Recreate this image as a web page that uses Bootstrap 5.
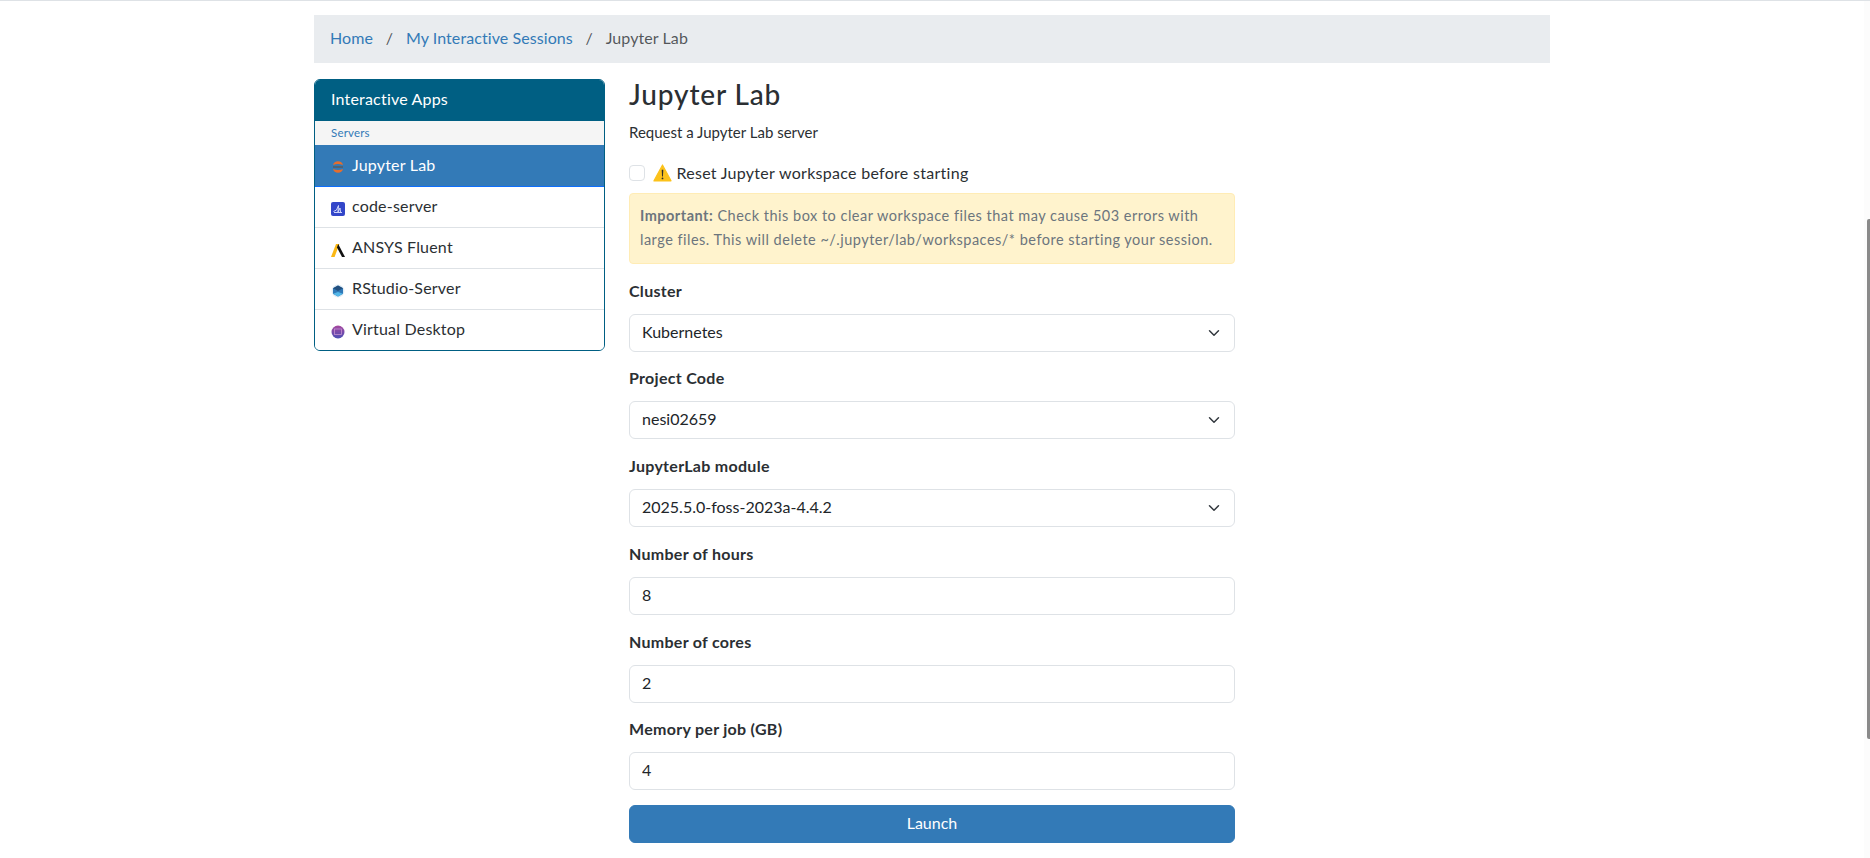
<!DOCTYPE html>
<html lang="en">
<head>
    <meta charset="UTF-8" />
    <meta name="viewport" content="width=device-width, initial-scale=1.0"/>
    <title>Jupyter Lab</title>
    <link href="https://cdn.jsdelivr.net/npm/bootstrap@5.3.1/dist/css/bootstrap.min.css" rel="stylesheet"/>
    <style>
        html, body { height: 100%; overflow: hidden; }
        body { font-family: "Lato", "Liberation Sans", sans-serif; color: #2b2f33; letter-spacing: .012em; }
        a { color: #337ab7; text-decoration: none; }
        .page-shell { height: 100%; display: flex; border-top: 1px solid #dee2e6; }
        .page-main { flex: 1 1 auto; min-width: 0; }
        .page-wrap { max-width: 1260px; margin: 0 auto; padding: 0 12px; }
        .fake-scroll { flex: 0 0 6px; background: #fcfcfc; display: flex; flex-direction: column; align-items: flex-end; padding-top: 218px; }
        .fake-thumb { width: 3px; height: 520px; background: #8a8a8a; border-radius: 2px 0 0 2px; }
        .crumbs { --bs-breadcrumb-item-padding-x: .8rem; background: #e9ecef; padding: 11px 16px 13px; margin: 14px 0 16px; letter-spacing: .005em; }
        .apps-box { border: 1px solid #005f83; border-radius: 6px; overflow: hidden; }
        .apps-head { background: #005f83; color: #fff; padding: 7px 16px 10px; }
        .apps-group { background: #f5f5f5; color: #337ab7; font-size: 11.5px; line-height: 24px; padding: 0 16px; }
        .apps-box .list-group-item { padding: 7px 16px 9px; color: #2b2f33; border-width: 0 0 1px; display: flex; align-items: center; gap: 7px; }
        .apps-box .list-group-item:last-child { border-bottom: 0; }
        .apps-box .list-group-item.active { background: #337ab7; color: #fff; padding: 8px 16px 9px; }
        .app-icon { width: 14px; height: 14px; flex: none; margin-top: 6px; }
        .active .app-icon { margin-top: 4px; }
        .app-title { font-size: 28px; font-weight: 500; line-height: 34px; margin: -2px 0 10px; letter-spacing: .03em; }
        .app-sub { font-size: 15px; letter-spacing: 0; margin-bottom: 17px; }
        .reset-check { margin-bottom: 8px; padding-left: 0; display: flex; align-items: center; gap: 8px; min-height: 24px; letter-spacing: .018em; }
        .reset-check .form-check-input { float: none; margin: 0; width: 16px; height: 16px; }
        .warn-icon { width: 19px; height: 18px; vertical-align: -3px; }
        .reset-note { background: #fff3cd; border: 1px solid #ffecb5; border-radius: 4px; color: #6c757d; font-size: 14.5px; letter-spacing: .034em; line-height: 24px; padding: 10px 10px 11px; margin-bottom: 15px; }
        .field { margin-bottom: 14.8px; }
        .field label { font-weight: 700; margin-bottom: 11px; display: block; letter-spacing: .018em; }
        .form-select, .form-control { padding-top: 5px; padding-bottom: 7px; }
        .tight-value { letter-spacing: 0; }
        .launch-btn { --bs-btn-bg: #337ab7; --bs-btn-border-color: #337ab7; padding-top: 5px; padding-bottom: 7px; }
    </style>
</head>
<body>
<div class="page-shell">
    <div class="page-main">
        <div class="page-wrap">
            <nav>
                <ol class="breadcrumb crumbs">
                    <li class="breadcrumb-item"><a href="#">Home</a></li>
                    <li class="breadcrumb-item"><a href="#">My Interactive Sessions</a></li>
                    <li class="breadcrumb-item active">Jupyter Lab</li>
                </ol>
            </nav>
            <div class="row">
                <div class="col-3">
                    <div class="apps-box">
                        <div class="apps-head">Interactive Apps</div>
                        <div class="apps-group">Servers</div>
                        <div class="list-group list-group-flush">
                            <a href="#" class="list-group-item active">
                                <svg class="app-icon" viewBox="0 0 14 14"><path d="M2 5a5.2 5.2 0 0 1 10 0a7 3 0 0 0-10 0z" fill="#e46e2e"/><path d="M2 9a5.2 5.2 0 0 0 10 0a7 3 0 0 1-10 0z" fill="#e46e2e"/><rect x="2" y="6.3" width="10" height="1.4" fill="#5a5a5a"/></svg>
                                Jupyter Lab
                            </a>
                            <a href="#" class="list-group-item">
                                <svg class="app-icon" viewBox="0 0 14 14"><rect width="14" height="14" rx="2" fill="#3346c9"/><path d="M2.5 9.5 5.5 8l2-4.5-.5 6.5 2-4 .5 4M3 10.5h8" stroke="#dfe4ff" stroke-width=".9" fill="none"/></svg>
                                code-server
                            </a>
                            <a href="#" class="list-group-item">
                                <svg class="app-icon" viewBox="0 0 14 14"><path d="M0 14 5 1h3.4L3.6 14z" fill="#fbb815"/><path d="M7.2 1 14 14h-3L6 4.5z" fill="#111"/></svg>
                                ANSYS Fluent
                            </a>
                            <a href="#" class="list-group-item">
                                <svg class="app-icon" viewBox="0 0 14 14"><circle cx="7" cy="7" r="6.5" fill="#e3edf5"/><path d="M7 1.5 12 4.2v5.6L7 12.5 2 9.8V4.2z" fill="#2f78b7"/><path d="M2 4.2 7 1.5l5 2.7L7 7z" fill="#234f7d"/><path d="M2 9.8 7 12.5l5-2.7L7 8z" fill="#53b7e8"/></svg>
                                RStudio-Server
                            </a>
                            <a href="#" class="list-group-item">
                                <svg class="app-icon" viewBox="0 0 14 14"><defs><linearGradient id="vdGrad" x1="0" y1="0" x2="0" y2="1"><stop offset="0" stop-color="#a8489f"/><stop offset="1" stop-color="#4a4fb5"/></linearGradient></defs><circle cx="7" cy="7" r="6.5" fill="url(#vdGrad)"/><rect x="3.5" y="4" width="7" height="5.5" fill="none" stroke="#c490cf" stroke-width=".8"/></svg>
                                Virtual Desktop
                            </a>
                        </div>
                    </div>
                </div>
                <div class="col-6">
                    <h3 class="app-title">Jupyter Lab</h3>
                    <p class="app-sub">Request a Jupyter Lab server</p>
                    <form>
                        <div class="form-check reset-check">
                            <input class="form-check-input" type="checkbox" id="resetWs"/>
                            <label class="form-check-label" for="resetWs"><svg class="warn-icon" viewBox="0 0 16 16"><path d="M8 .8 15.6 15H.4z" fill="#fcc21b" stroke="#fcc21b" stroke-linejoin="round"/><path d="M7.3 5h1.4l-.3 6H7.6z" fill="#2b2b2b"/><circle cx="8" cy="12.8" r=".8" fill="#2b2b2b"/></svg> Reset Jupyter workspace before starting</label>
                        </div>
                        <div class="reset-note"><strong>Important:</strong> Check this box to clear workspace files that may cause 503 errors with large files. This will delete ~/.jupyter/lab/workspaces/* before starting your session.</div>
                        <div class="field">
                            <label for="cluster">Cluster</label>
                            <select class="form-select" id="cluster"><option>Kubernetes</option></select>
                        </div>
                        <div class="field">
                            <label for="project">Project Code</label>
                            <select class="form-select" id="project"><option>nesi02659</option></select>
                        </div>
                        <div class="field">
                            <label for="module">JupyterLab module</label>
                            <select class="form-select tight-value" id="module"><option>2025.5.0-foss-2023a-4.4.2</option></select>
                        </div>
                        <div class="field">
                            <label for="hours">Number of hours</label>
                            <input class="form-control" id="hours" type="number" value="8"/>
                        </div>
                        <div class="field">
                            <label for="cores">Number of cores</label>
                            <input class="form-control" id="cores" type="number" value="2"/>
                        </div>
                        <div class="field">
                            <label for="memory">Memory per job (GB)</label>
                            <input class="form-control" id="memory" type="number" value="4"/>
                        </div>
                        <button type="button" class="btn btn-primary launch-btn w-100">Launch</button>
                    </form>
                </div>
            </div>
        </div>
    </div>
    <div class="fake-scroll"><div class="fake-thumb"></div></div>
</div>
<script src="https://cdn.jsdelivr.net/npm/bootstrap@5.3.1/dist/js/bootstrap.bundle.min.js"></script>
</body>
</html>
